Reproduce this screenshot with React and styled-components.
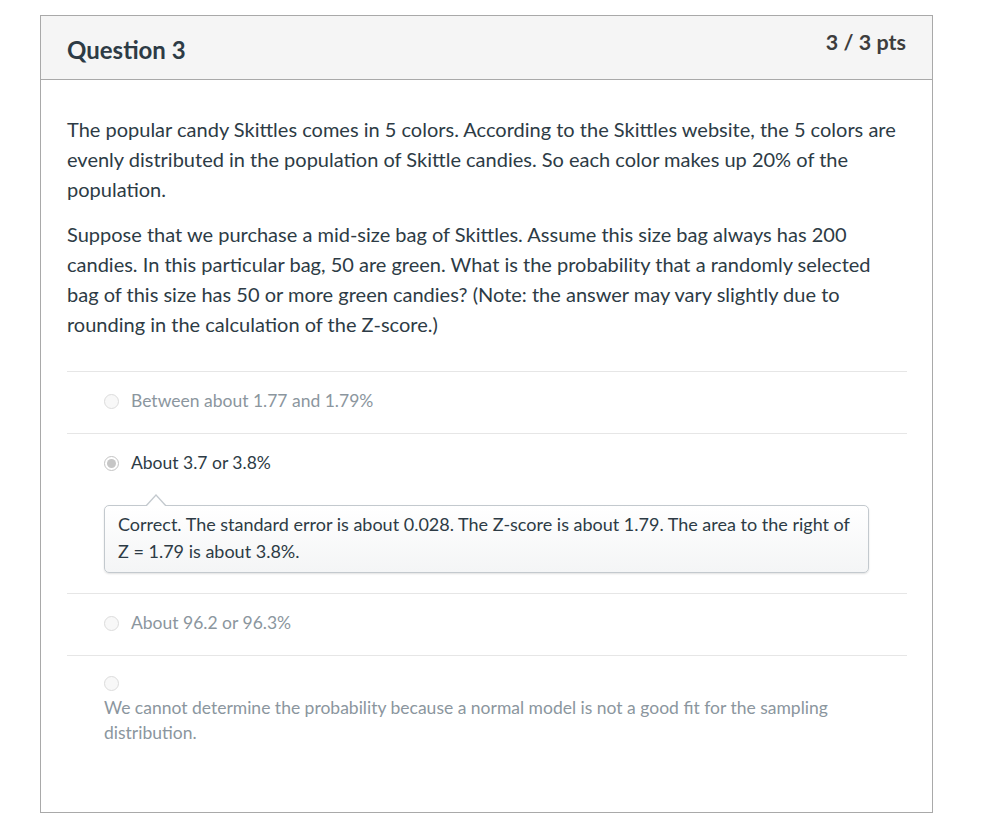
import React from 'react'
import styled, { createGlobalStyle } from 'styled-components'

const GlobalStyle = createGlobalStyle`
  * { box-sizing: border-box; }
  body {
    margin: 0;
    background: #ffffff;
    font-family: Lato, "Liberation Sans", sans-serif;
    color: #2d3b45;
  }
`

const Page = styled.div`
  padding: 15px 0 20px 40px;
`

const Card = styled.div`
  width: 893px;
  border: 1px solid #a9a9a9;
  background: #fff;
`

const Header = styled.div`
  display: flex;
  justify-content: space-between;
  align-items: flex-start;
  height: 64px;
  padding: 0 26px;
  background: #f5f5f5;
  border-bottom: 1px solid #a9a9a9;
`

const Title = styled.h2`
  margin: 0;
  padding-top: 21px;
  font-size: 24px;
  font-weight: 700;
  line-height: 26px;
  color: #2d3b45;
`

const Points = styled.div`
  padding-top: 14px;
  font-size: 21.5px;
  font-weight: 700;
  line-height: 24px;
  color: #3d3d3d;
`

const Body = styled.div`
  padding: 34px 25px 67px 26px;
`

const Text = styled.p`
  margin: 0 0 15px;
  font-size: 20px;
  line-height: 30px;
  color: #2d3b45;
`

const Answers = styled.div`
  margin-top: 32px;
`

const Row = styled.div`
  border-top: 1px solid #e6e6e6;
  padding: 17px 0 20px 37px;
  &:last-child { padding-bottom: 0; }
`

const Choice = styled.label`
  display: flex;
  flex-direction: ${p => (p.$stacked ? 'column' : 'row')};
  align-items: ${p => (p.$stacked ? 'flex-start' : 'center')};
  gap: ${p => (p.$stacked ? '4px' : '12px')};
  font-size: 17.5px;
  line-height: ${p => (p.$stacked ? '25px' : '24px')};
  color: ${p => (p.$selected ? '#2d3b45' : '#8b969e')};
`

const Radio = styled.span`
  flex: none;
  width: 15px;
  height: 15px;
  margin-top: ${p => (p.$stacked ? '3px' : '0')};
  border-radius: 50%;
  border: 1px solid ${p => (p.$checked ? '#c4c4c4' : '#dcdcdc')};
  background: ${p => (p.$checked ? '#fff' : '#f8f8f8')};
  display: grid;
  place-items: center;
  &::after {
    content: '';
    display: ${p => (p.$checked ? 'block' : 'none')};
    width: 9px;
    height: 9px;
    border-radius: 50%;
    background: #c6c6c6;
  }
`

const Feedback = styled.div`
  position: relative;
  margin: 30px 0 0 0;
  width: 765px;
  padding: 5px 12px 7px 13px;
  border: 1px solid #c3c9ce;
  border-radius: 5px;
  background: linear-gradient(#ffffff, #f4f5f6);
  box-shadow: 0 1px 2px rgba(0, 0, 0, 0.12);
  font-size: 18px;
  line-height: 27px;
  color: #2d3b45;
  &::before {
    content: '';
    position: absolute;
    left: 40px;
    top: -12px;
    border: 11px solid transparent;
    border-top: 0;
    border-bottom: 12px solid #c3c9ce;
  }
  &::after {
    content: '';
    position: absolute;
    left: 41px;
    top: -10px;
    border: 10px solid transparent;
    border-top: 0;
    border-bottom: 11px solid #ffffff;
  }
`

const answers = [
  { text: 'Between about 1.77 and 1.79%' },
  {
    text: 'About 3.7 or 3.8%',
    selected: true,
    feedback:
      'Correct. The standard error is about 0.028. The Z-score is about 1.79. The area to the right of Z = 1.79 is about 3.8%.',
  },
  { text: 'About 96.2 or 96.3%' },
  {
    text: 'We cannot determine the probability because a normal model is not a good fit for the sampling distribution.',
    stacked: true,
  },
]

export default function App() {
  return (
    <>
      <GlobalStyle />
      <Page>
        <Card>
          <Header>
            <Title>Question 3</Title>
            <Points>3 / 3 pts</Points>
          </Header>
          <Body>
            <Text>
              The popular candy Skittles comes in 5 colors. According to the Skittles website, the 5 colors are
              evenly distributed in the population of Skittle candies. So each color makes up 20% of the
              population.
            </Text>
            <Text>
              Suppose that we purchase a mid-size bag of Skittles. Assume this size bag always has 200
              candies. In this particular bag, 50 are green. What is the probability that a randomly selected
              bag of this size has 50 or more green candies? (Note: the answer may vary slightly due to
              rounding in the calculation of the Z-score.)
            </Text>
            <Answers>
              {answers.map((a, i) => (
                <Row key={i}>
                  <Choice $selected={a.selected} $stacked={a.stacked}>
                    <Radio $checked={a.selected} $stacked={a.stacked} />
                    <span>{a.text}</span>
                  </Choice>
                  {a.feedback && <Feedback>{a.feedback}</Feedback>}
                </Row>
              ))}
            </Answers>
          </Body>
        </Card>
      </Page>
    </>
  )
}
